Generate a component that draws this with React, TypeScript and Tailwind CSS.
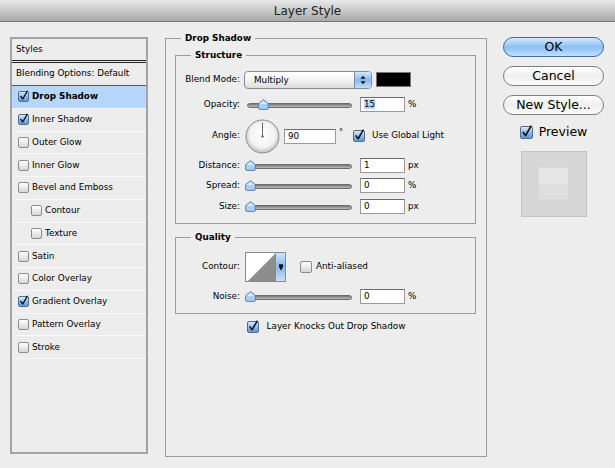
import React from "react"

interface StyleRow {
  label: string
  on?: boolean
  active?: boolean
  sub?: boolean
}

const styleRows: StyleRow[] = [
  { label: "Drop Shadow", on: true, active: true },
  { label: "Inner Shadow", on: true },
  { label: "Outer Glow" },
  { label: "Inner Glow" },
  { label: "Bevel and Emboss" },
  { label: "Contour", sub: true },
  { label: "Texture", sub: true },
  { label: "Satin" },
  { label: "Color Overlay" },
  { label: "Gradient Overlay", on: true },
  { label: "Pattern Overlay" },
  { label: "Stroke" },
]

function Check({ on, size = "md" }: { on?: boolean; size?: "sm" | "md" | "lg" }) {
  const dims = size === "sm" ? "w-[11px] h-[11px]" : size === "lg" ? "w-[13px] h-[13px]" : "w-[12px] h-[12px]"
  const skin = on
    ? "border-[#4d6d96] from-[#d9e9fb] via-[#8fbcec] to-[#5f97d6]"
    : "border-[#8c8c8c] from-white to-[#d6d6d6]"
  return (
    <div className={`relative shrink-0 rounded-[2px] border bg-linear-to-b ${dims} ${skin}`}>
      {on && (
        <svg viewBox="0 0 12 12" className="absolute inset-0 w-full h-full overflow-visible">
          <path d="M2.4 5.9 L5 9.3 L10.9 -0.9" fill="none" stroke="#111" strokeWidth="1.8" strokeLinecap="round" strokeLinejoin="round" />
        </svg>
      )}
    </div>
  )
}

function Slider({ value }: { value: number }) {
  return (
    <div className="relative ml-[5px] w-[107px] h-[12px] shrink-0">
      <div className="absolute left-[2px] right-0 top-[4px] h-[5px] rounded-full border border-[#6c6c6c] bg-linear-to-b from-[#7a7a7a] to-[#bdbdbd]" />
      <svg viewBox="0 0 11 11" className="absolute top-0 w-[11px] h-[11px]" style={{ left: Math.round(value * 0.85) }}>
        <path d="M5.5 0.6 L10.4 4.6 L10.4 9 Q10.4 10.4 9 10.4 L2 10.4 Q0.6 10.4 0.6 9 L0.6 4.6 Z" fill="#a9cdf3" stroke="#5479a6" strokeWidth="0.9" />
        <path d="M5.5 1.8 L9.3 4.9 L1.7 4.9 Z" fill="#dcebfb" />
      </svg>
    </div>
  )
}

function Field({ value, wide, selected }: { value: string; wide?: boolean; selected?: boolean }) {
  return (
    <div className={`h-[15px] shrink-0 bg-white border border-[#9a9a9a] border-t-[#6a6a6a] pl-[3px] leading-[13px] ${wide ? "w-[52px]" : "w-[45px]"}`}>
      <span className={selected ? "bg-[#b5d5ff]" : ""}>{value}</span>
    </div>
  )
}

function Label({ children }: { children: React.ReactNode }) {
  return <span className="w-[64px] shrink-0 text-right">{children}</span>
}

function SliderRow({ label, value, unit, className }: { label: string; value: string; unit: string; className: string }) {
  return (
    <div className={`flex items-center h-[15px] ${className}`}>
      <Label>{label}</Label>
      <Slider value={0} />
      <div className="ml-[8px]">
        <Field value={value} />
      </div>
      <span className="ml-[3px]">{unit}</span>
    </div>
  )
}

function AquaButton({ children, primary, className = "" }: { children: React.ReactNode; primary?: boolean; className?: string }) {
  const skin = primary
    ? "border-[#3d6ba6] from-[#d6e9fc] via-[#8cc0f3] to-[#c2e0fd]"
    : "border-[#7f7f7f] from-white via-[#efefef] to-[#fbfbfb]"
  return (
    <div className={`w-[101px] h-[20px] rounded-full border bg-linear-to-b flex items-center justify-center text-[12.5px] leading-[18px] ${skin} ${className}`}>
      {children}
    </div>
  )
}

export default function App() {
  return (
    <div className="w-[615px] h-[468px] bg-[#ededed] font-['DejaVu_Sans',sans-serif] text-[8.8px] text-black flex flex-col overflow-hidden">
      <div className="h-[22px] shrink-0 flex items-center justify-center border-b border-[#777] bg-linear-to-b from-[#e9e9e9] to-[#a9a9a9] text-[12px] text-[#222]">
        Layer Style
      </div>

      <div className="flex items-start">
        {/* styles list */}
        <div className="ml-[10px] mt-[15px] w-[138px] h-[417px] shrink-0 border-2 border-[#a3a3a3] bg-[#ececec]">
          <div className="h-[24px] pl-[4px] flex items-center border-b-[3px] border-double border-[#222]">Styles</div>
          <div className="h-[23px] pl-[4px] flex items-center border-b border-[#555]">Blending Options: Default</div>
          {styleRows.map((row) => (
            <div
              key={row.label}
              className={`h-[22.75px] flex items-center gap-[3px] border-b border-[#f8f8f8] ${row.sub ? "pl-[19px]" : "pl-[6px]"} ${row.active ? "bg-[#b7d6fb] font-bold" : ""}`}
            >
              <Check on={row.on} size="sm" />
              <span>{row.label}</span>
            </div>
          ))}
        </div>

        {/* drop shadow settings */}
        <fieldset className="ml-[17px] mt-[10px] w-[322px] h-[425px] shrink-0 border border-[#9c9c9c] pl-[9px]">
          <legend className="ml-[6px] px-[4px] font-bold leading-[12px]">Drop Shadow</legend>

          <fieldset className="mt-[5px] w-[301px] border border-[#9c9c9c] pt-[9px] pb-[9px]">
            <legend className="ml-[15px] px-[4px] font-bold leading-[12px]">Structure</legend>

            <div className="flex items-center h-[19px]">
              <Label>Blend Mode:</Label>
              <div className="ml-[4px] flex h-[18px] w-[128px] rounded-[4px] border border-[#8b8b8b] bg-linear-to-b from-white via-[#f3f3f3] to-[#dcdcdc] overflow-hidden">
                <span className="flex-1 pl-[9px] leading-[16px]">Multiply</span>
                <div className="w-[17px] border-l border-[#6d8fbb] bg-linear-to-b from-[#d4e6fb] via-[#89b8ec] to-[#c3dcf7] flex items-center justify-center">
                  <svg viewBox="0 0 7 11" className="w-[6px] h-[10px]">
                    <path d="M3.5 0.5 L6.5 4 L0.5 4 Z M0.5 7 L6.5 7 L3.5 10.5 Z" fill="#111" />
                  </svg>
                </div>
              </div>
              <div className="ml-[4px] w-[35px] h-[15px] bg-black border border-[#777]" />
            </div>

            <div className="mt-[8px] flex items-center h-[15px]">
              <Label>Opacity:</Label>
              <Slider value={15} />
              <div className="ml-[8px]">
                <Field value="15" selected />
              </div>
              <span className="ml-[3px]">%</span>
            </div>

            <div className="mt-[7px] flex items-center h-[34px]">
              <Label>Angle:</Label>
              <svg viewBox="0 0 35 35" className="ml-[5px] w-[35px] h-[35px] shrink-0">
                <defs>
                  <radialGradient id="dialFill" cx="0.5" cy="0.45" r="0.55">
                    <stop offset="0" stopColor="#ffffff" />
                    <stop offset="0.7" stopColor="#f2f2f2" />
                    <stop offset="1" stopColor="#bdbdbd" />
                  </radialGradient>
                </defs>
                <circle cx="17.5" cy="17.5" r="16.5" fill="url(#dialFill)" stroke="#8c8c8c" />
                <line x1="17.5" y1="17.5" x2="17.5" y2="3.5" stroke="#6a6a6a" />
                <circle cx="17.5" cy="17.5" r="1.2" fill="#666" />
              </svg>
              <div className="ml-[4px]">
                <Field value="90" wide />
              </div>
              <span className="w-[17px] shrink-0 pl-[3px] self-start mt-[8px] text-[8px]">°</span>
              <Check on />
              <span className="ml-[7px]">Use Global Light</span>
            </div>

            <SliderRow label="Distance:" value="1" unit="px" className="mt-[5px]" />
            <SliderRow label="Spread:" value="0" unit="%" className="mt-[5px]" />
            <SliderRow label="Size:" value="0" unit="px" className="mt-[6px]" />
          </fieldset>

          <fieldset className="mt-[7px] w-[301px] border border-[#9c9c9c] pt-[9px] pb-[9px]">
            <legend className="ml-[15px] px-[4px] font-bold leading-[12px]">Quality</legend>

            <div className="flex items-center h-[30px]">
              <Label>Contour:</Label>
              <div className="ml-[5px] flex h-[30px] w-[41px] shrink-0 border border-[#8a8a8a]">
                <svg viewBox="0 0 29 28" preserveAspectRatio="none" className="w-[29px] h-full bg-white">
                  <polygon points="2,28 29,1 29,28" fill="#8c8c8c" />
                </svg>
                <div className="flex-1 flex items-center justify-center border-l border-[#6d8fbb] bg-linear-to-b from-[#cfe3fa] via-[#86b6ec] to-[#c9e0f9]">
                  <svg viewBox="0 0 5 8" className="w-[4px] h-[7px]">
                    <path d="M0 0 H5 V3 L2.5 8 L0 3 Z" fill="#111" />
                  </svg>
                </div>
              </div>
              <div className="ml-[14px]">
                <Check />
              </div>
              <span className="ml-[4px]">Anti-aliased</span>
            </div>

            <SliderRow label="Noise:" value="0" unit="%" className="mt-[7px]" />
          </fieldset>

          <div className="mt-[6px] flex items-center justify-center gap-[8px] pr-[9px]">
            <Check on />
            <span>Layer Knocks Out Drop Shadow</span>
          </div>
        </fieldset>

        {/* buttons */}
        <div className="ml-[16px] mt-[15px] w-[101px] shrink-0 flex flex-col items-center">
          <AquaButton primary>OK</AquaButton>
          <AquaButton className="mt-[9px]">Cancel</AquaButton>
          <AquaButton className="mt-[9px]">New Style...</AquaButton>
          <div className="mt-[8px] flex items-center gap-[6px] text-[12.5px]">
            <Check on size="lg" />
            <span>Preview</span>
          </div>
          <div className="mt-[9px] w-[66px] h-[66px] border border-[#c4c4c4] bg-[#d6d6d6] flex items-center justify-center">
            <div className="w-[31px] h-[33px] flex flex-col border border-[#d9d9d9]">
              <div className="flex-1 bg-[#e6e6e6]" />
              <div className="flex-1 bg-[#dedede]" />
            </div>
          </div>
        </div>
      </div>
    </div>
  )
}
